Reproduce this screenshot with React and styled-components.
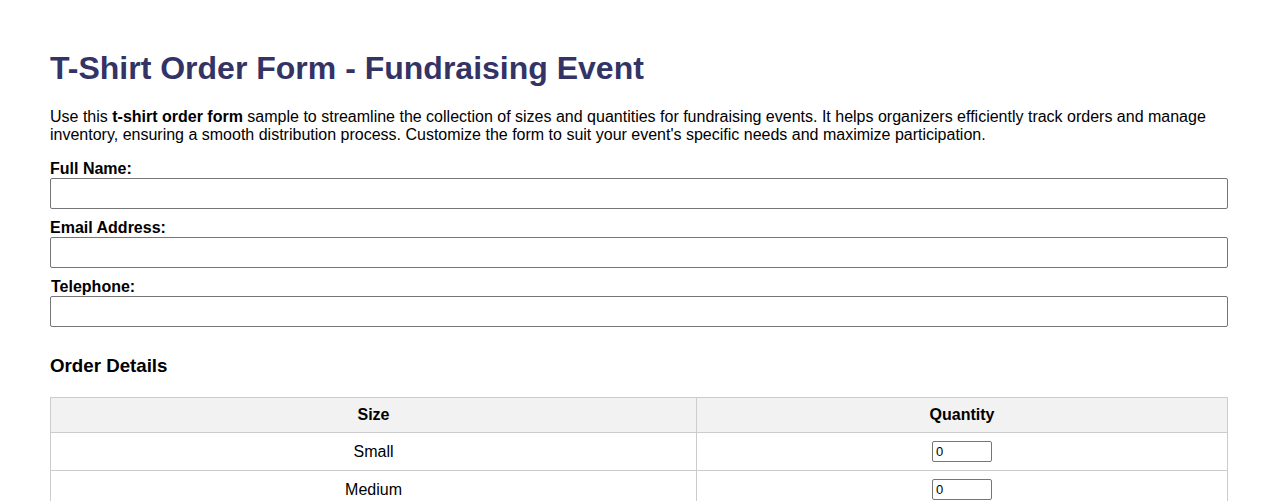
import styled, { createGlobalStyle } from "styled-components";

const GlobalStyle = createGlobalStyle`
  body {
    margin: 8px;
    background: #ffffff;
    font-family: "Liberation Sans", Arial, sans-serif;
    color: #000000;
  }
`;

const SIZES = ["Small", "Medium", "Large", "X-Large", "XX-Large"];

const Page = styled.div`
  padding: 21px 42px 20px;
`;

const Title = styled.h1`
  font-size: 32px;
  line-height: 37px;
  margin: 21px 0 21px;
  color: #333366;
`;

const Intro = styled.p`
  font-size: 16px;
  margin: 0 0 16px;
`;

const Field = styled.div`
  display: flex;
  flex-direction: column;
  margin-bottom: 10px;
`;

const Label = styled.label`
  font-size: 16px;
  font-weight: 700;
  line-height: 18px;
  padding-left: ${(p) => (p.$nudge ? "1px" : "0")};
`;

const TextInput = styled.input`
  box-sizing: border-box;
  width: 100%;
  height: 31px;
  border: 1px solid #767676;
  border-radius: 2px;
  padding: 0 6px;
  font-size: 14px;
  font-family: inherit;
  color: #000000;
`;

const SectionTitle = styled.h3`
  font-size: 18.72px;
  margin: 28px 0 20px;
`;

const Table = styled.table`
  width: 100%;
  border-collapse: collapse;
  font-size: 16px;
`;

const HeadCell = styled.th`
  background: #f2f2f2;
  border: 1px solid #cccccc;
  padding: 8px;
  line-height: 18px;
  text-align: center;
  width: ${(p) => p.$width || "auto"};
`;

const Cell = styled.td`
  border: 1px solid #cccccc;
  padding: 8px;
  text-align: center;
  line-height: 18px;
`;

const QtyInput = styled.input`
  box-sizing: border-box;
  width: 60px;
  height: 21px;
  border: 1px solid #767676;
  border-radius: 2px;
  padding: 0 3px;
  font-size: 13px;
  font-family: inherit;
  color: #000000;
  vertical-align: middle;
`;

export default function App() {
  return (
    <Page>
      <GlobalStyle />
      <Title>T-Shirt Order Form - Fundraising Event</Title>
      <Intro>
        Use this <strong>t-shirt order form</strong> sample to streamline the collection of sizes
        and quantities for fundraising events. It helps organizers efficiently track orders and
        manage inventory, ensuring a smooth distribution process. Customize the form to suit your
        event's specific needs and maximize participation.
      </Intro>
      <Field>
        <Label htmlFor="name">Full Name:</Label>
        <TextInput id="name" type="text" />
      </Field>
      <Field>
        <Label htmlFor="email">Email Address:</Label>
        <TextInput id="email" type="email" />
      </Field>
      <Field>
        <Label htmlFor="phone" $nudge>Telephone:</Label>
        <TextInput id="phone" type="tel" />
      </Field>
      <SectionTitle>Order Details</SectionTitle>
      <Table>
        <thead>
          <tr>
            <HeadCell $width="629px">Size</HeadCell>
            <HeadCell>Quantity</HeadCell>
          </tr>
        </thead>
        <tbody>
          {SIZES.map((size) => (
            <tr key={size}>
              <Cell>{size}</Cell>
              <Cell>
                <QtyInput type="number" defaultValue={0} min={0} />
              </Cell>
            </tr>
          ))}
        </tbody>
      </Table>
    </Page>
  );
}
